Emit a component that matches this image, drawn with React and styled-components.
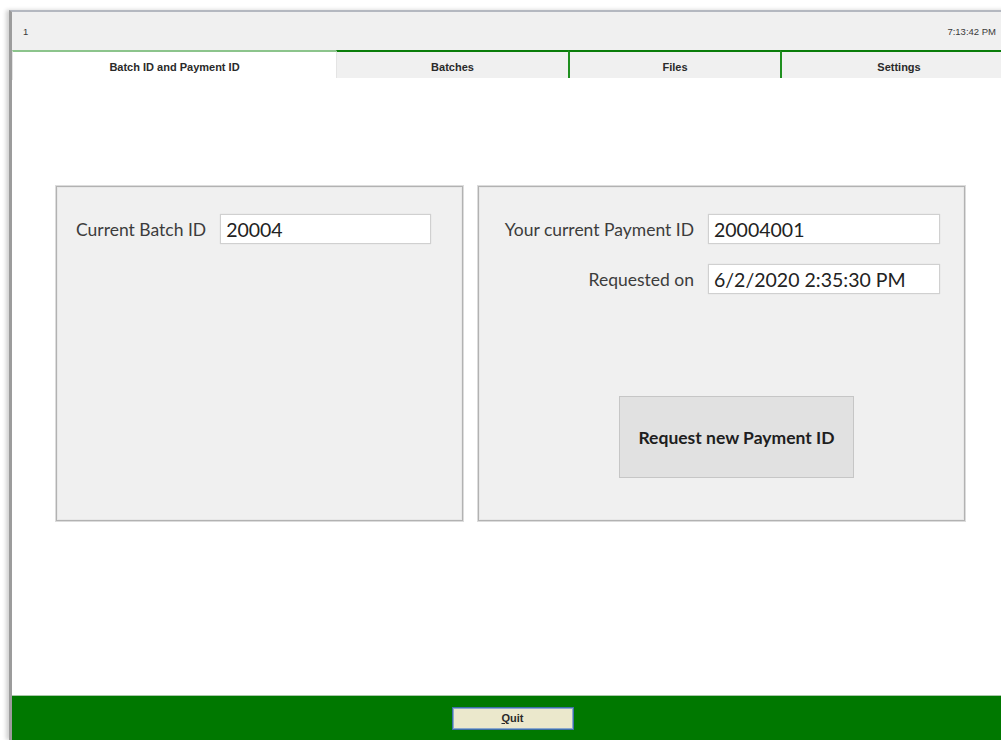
import React from "react";
import styled, { createGlobalStyle } from "styled-components";

const Global = createGlobalStyle`
  html, body {
    margin: 0;
    padding: 0;
    background: #ffffff;
    height: 100%;
    overflow: hidden;
  }
  #root { height: 100%; }
`;

const Window = styled.div`
  margin: 10px 0 0 9px;
  height: calc(100vh - 10px);
  width: 1004px;
  display: flex;
  flex-direction: column;
  border-left: 3px solid #9c9c9c;
  border-top: 2px solid #b4b8c0;
  box-shadow: -3px 0 4px rgba(0, 0, 0, 0.18);
  background: #ffffff;
  font-family: "Liberation Sans", Arial, sans-serif;
  box-sizing: border-box;
`;

const StatusBar = styled.div`
  height: 38px;
  flex: none;
  display: flex;
  align-items: center;
  justify-content: space-between;
  padding: 0 17px 0 11px;
  background: #f0f0f0;
  font-size: 9.5px;
  color: #3a3a3a;
`;

const TabStrip = styled.div`
  display: flex;
  flex: none;
  height: 30px;
`;

const Tab = styled.div`
  width: ${(p) => p.$w}px;
  flex: none;
  box-sizing: border-box;
  display: flex;
  align-items: center;
  justify-content: center;
  font-size: 11px;
  font-weight: bold;
  color: #2a2a2a;
  background: ${(p) => (p.$active ? "#ffffff" : "#f0f0f0")};
  border-top: 2px solid ${(p) => (p.$active ? "#8cc48c" : "#0a7d0a")};
  border-left: ${(p) => (p.$sep ? "2px solid #1f8f1f" : "1px solid #e4e4e4")};
  height: ${(p) => (p.$active ? 30 : 28)}px;
  padding-top: ${(p) => (p.$active ? 2 : 3)}px;
`;

const Main = styled.div`
  flex: 1;
  display: flex;
  align-items: flex-start;
  gap: 15px;
  padding: 106px 0 0 44px;
`;

const Panel = styled.div`
  width: ${(p) => p.$w}px;
  height: 335px;
  box-sizing: border-box;
  background: #f0f0f0;
  border: 1px solid #b2b2b2;
  box-shadow: 0 0 0 1px #dcdcdc, inset 0 0 0 1px #e8e8e8;
  font-family: Lato, "Noto Sans", sans-serif;
`;

const FieldGrid = styled.div`
  display: grid;
  grid-template-columns: ${(p) => p.$cols};
  justify-content: start;
  column-gap: 14px;
  row-gap: 20px;
  align-items: center;
  padding: ${(p) => p.$pad};
`;

const Label = styled.div`
  font-size: 17.5px;
  color: #3c3c3c;
  text-align: ${(p) => (p.$right ? "right" : "left")};
  white-space: nowrap;
`;

const Field = styled.div`
  height: 30px;
  box-sizing: border-box;
  background: #ffffff;
  border: 1px solid #d0d0d0;
  box-shadow: 0 0 1px rgba(0, 0, 0, 0.12);
  display: flex;
  align-items: center;
  padding: 1px 0 0 5px;
  font-size: 19.5px;
  color: #222;
  white-space: nowrap;
`;

const RequestButton = styled.button`
  display: block;
  margin: 102px 0 0 140px;
  width: 235px;
  height: 82px;
  background: #e1e1e1;
  border: 1px solid #c6c6c6;
  font-family: Lato, "Noto Sans", sans-serif;
  font-weight: bold;
  font-size: 17.5px;
  color: #1e1e1e;
  padding: 0;
`;

const Footer = styled.div`
  flex: none;
  height: 44px;
  background: #007800;
  border-top: 1px solid #a8c8a8;
  display: flex;
  align-items: center;
  justify-content: center;
`;

const QuitButton = styled.button`
  width: 122px;
  height: 23px;
  background: #ebe8cc;
  border: 1px solid #3f6fa8;
  box-shadow: inset 0 0 0 1px #8aa8cc;
  font-family: "Liberation Sans", Arial, sans-serif;
  font-size: 11px;
  font-weight: bold;
  color: #2a2a2a;
  padding: 0;
  u { text-decoration: underline; }
`;

const tabs = [
  { label: "Batch ID and Payment ID", w: 324, active: true },
  { label: "Batches", w: 232 },
  { label: "Files", w: 212, sep: true },
  { label: "Settings", w: 236, sep: true },
];

export default function App() {
  return (
    <>
      <Global />
      <Window>
        <StatusBar>
          <span>1</span>
          <span>7:13:42 PM</span>
        </StatusBar>
        <TabStrip>
          {tabs.map((t) => (
            <Tab key={t.label} $w={t.w} $active={t.active} $sep={t.sep}>
              {t.label}
            </Tab>
          ))}
        </TabStrip>
        <Main>
          <Panel $w={407}>
            <FieldGrid $cols="auto 211px" $pad="27px 0 0 19px">
              <Label>Current Batch ID</Label>
              <Field>20004</Field>
            </FieldGrid>
          </Panel>
          <Panel $w={487}>
            <FieldGrid $cols="215px 232px" $pad="27px 0 0 0">
              <Label $right>Your current Payment ID</Label>
              <Field>20004001</Field>
              <Label $right>Requested on</Label>
              <Field>6/2/2020 2:35:30 PM</Field>
            </FieldGrid>
            <RequestButton>Request new Payment ID</RequestButton>
          </Panel>
        </Main>
        <Footer>
          <QuitButton>
            <u>Q</u>uit
          </QuitButton>
        </Footer>
      </Window>
    </>
  );
}
